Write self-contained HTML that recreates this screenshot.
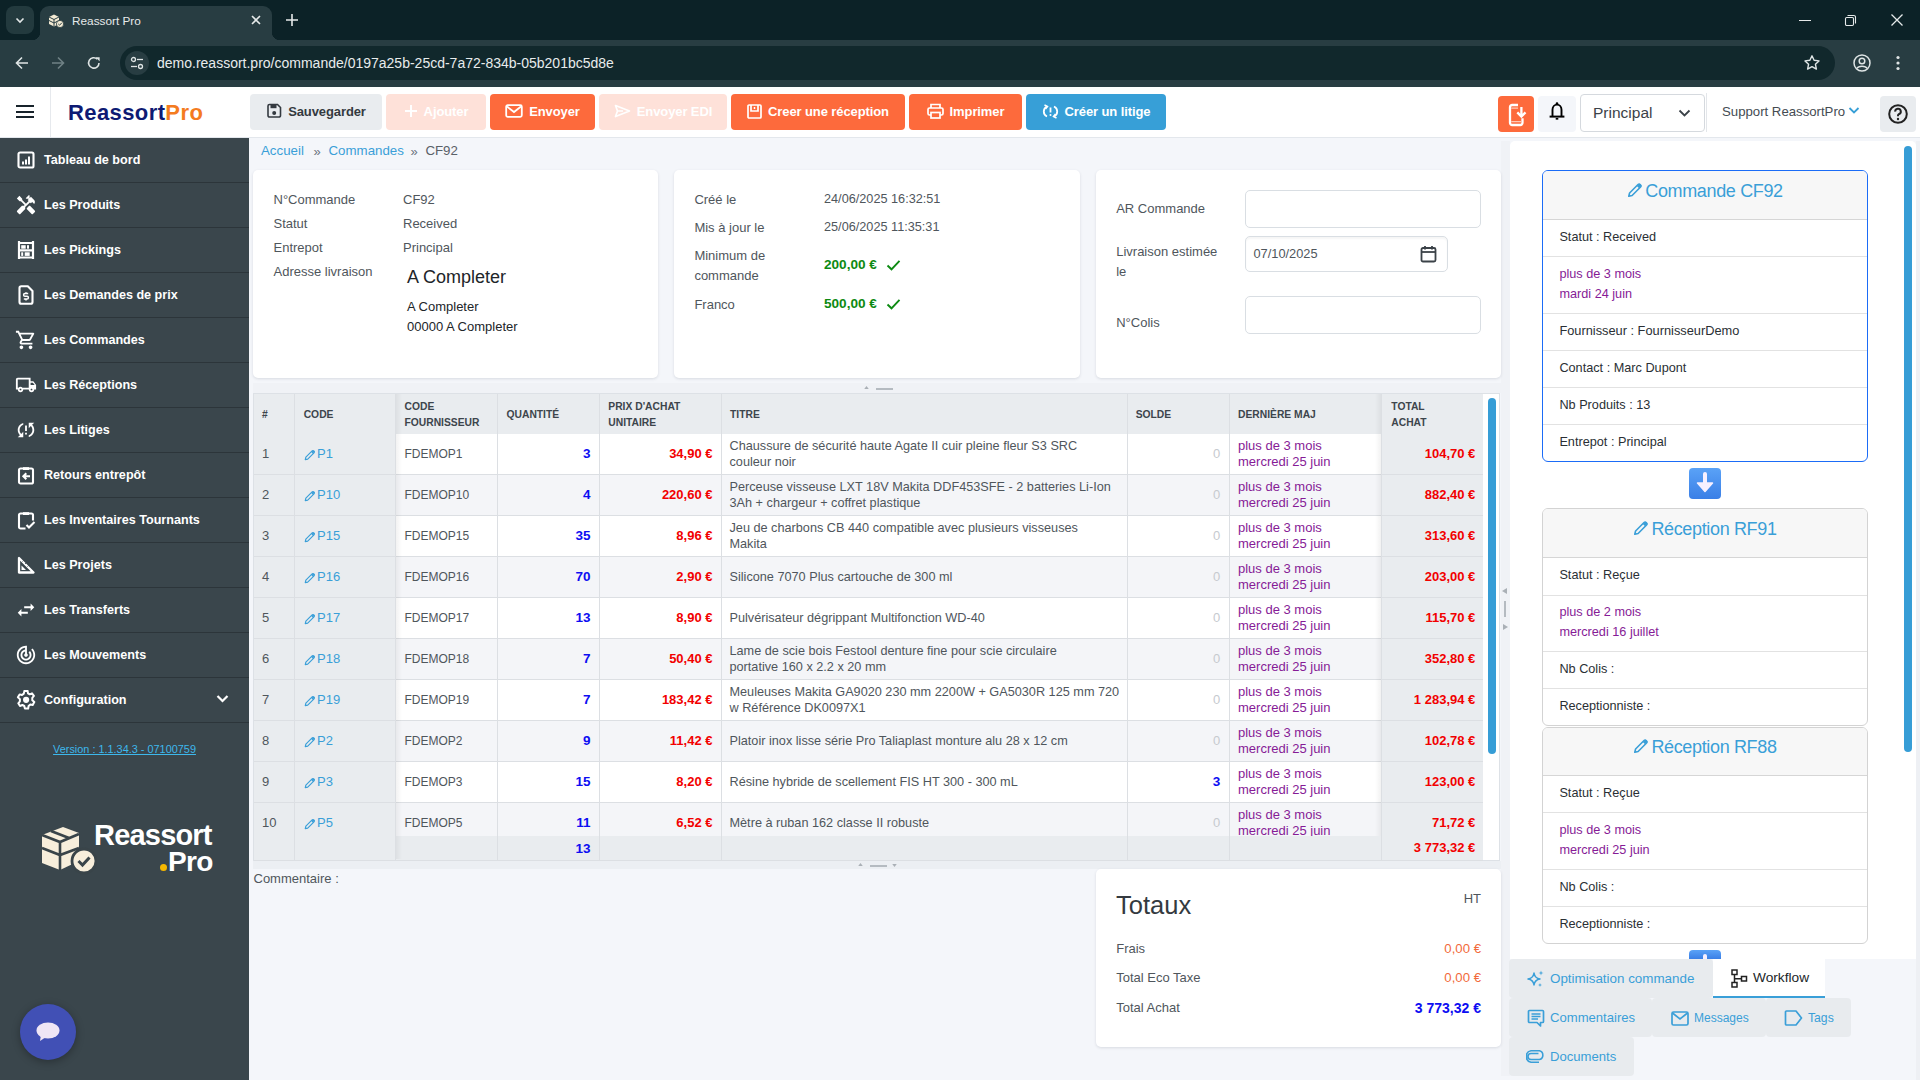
<!DOCTYPE html>
<html><head><meta charset="utf-8">
<style>
*{box-sizing:border-box}
html,body{margin:0;padding:0}
body{width:1920px;height:1080px;overflow:hidden;position:relative;font-family:"Liberation Sans",sans-serif;background:#f4f6fa;color:#495057}
.a{position:absolute}
svg{display:block}
/* chrome */
#tabbar{left:0;top:0;width:1920px;height:40px;background:#0c2227}
#toolbar{left:0;top:40px;width:1920px;height:47px;background:#283d42}
/* header */
#hdr{left:0;top:87px;width:1920px;height:51px;background:#fff;border-bottom:1px solid #e3e7ec}
.btn{position:absolute;top:94px;height:36px;padding-bottom:2px;border-radius:4px;color:#fff;font-weight:700;font-size:13px;display:flex;align-items:center;justify-content:center;gap:6px;letter-spacing:-0.1px}
.or{background:#fd6a3c}
.orl{background:#fee1d9}
/* sidebar */
#side{left:0;top:138px;width:249px;height:942px;background:#3a464c}
.si{position:absolute;left:0;width:249px;height:45px;border-bottom:1px solid #2c353a;color:#fff;font-weight:700;font-size:12.6px}
.si span{position:absolute;left:44px;top:15px}
.si svg{position:absolute;left:16px;top:12px}
/* cards */
.card{position:absolute;background:#fff;border-radius:5px;box-shadow:0 1px 2px rgba(0,0,0,0.08)}
.lbl{position:absolute;font-size:13px;color:#4a5157;white-space:nowrap}
/* table */
.th{position:absolute;font-size:11.5px;font-weight:700;color:#3f474d;letter-spacing:0.1px;line-height:16px}
.td{position:absolute;font-size:13px;white-space:nowrap}
</style></head><body>

<!-- ================= CHROME ================= -->
<div id="tabbar" class="a"></div>
<div id="toolbar" class="a"></div>
<!-- tab dropdown -->
<div class="a" style="left:6px;top:6px;width:28px;height:28px;border-radius:8px;background:#233a3e"></div>
<svg class="a" style="left:14px;top:14px" width="12" height="12" viewBox="0 0 12 12"><path d="M2.5 4.5 L6 8 L9.5 4.5" stroke="#e3e8e8" stroke-width="1.6" fill="none"/></svg>
<!-- active tab -->
<div class="a" style="left:40px;top:6px;width:232px;height:34px;background:#283d42;border-radius:9px 9px 0 0"></div>
<div class="a" style="left:32px;top:32px;width:8px;height:8px;background:radial-gradient(circle at 0 0,#0c2227 8px,#283d42 8.5px)"></div>
<div class="a" style="left:272px;top:32px;width:8px;height:8px;background:radial-gradient(circle at 8px 0,#0c2227 8px,#283d42 8.5px)"></div>
<!-- favicon -->
<svg class="a" style="left:48px;top:13px" width="16" height="15" viewBox="0 0 16 15"><path d="M1 4 L6 1.5 L11 4 L11 11 L6 13.5 L1 11 Z" fill="#f3ead3"/><path d="M1 4 L6 6.5 L11 4 M6 6.5 V13.5 M1 7.5 L6 10 L11 7.5" stroke="#283d42" stroke-width="1" fill="none"/><circle cx="12" cy="11" r="3.6" fill="#f3ead3" stroke="#283d42" stroke-width="0.8"/><path d="M10.3 11 L11.6 12.2 L13.8 9.8" stroke="#283d42" stroke-width="1" fill="none"/></svg>
<div class="a" style="left:72px;top:14px;font-size:11.8px;color:#e6eaea;white-space:nowrap">Reassort Pro</div>
<svg class="a" style="left:250px;top:14px" width="12" height="12" viewBox="0 0 12 12"><path d="M2 2 L10 10 M10 2 L2 10" stroke="#e6eaea" stroke-width="1.6"/></svg>
<svg class="a" style="left:285px;top:13px" width="14" height="14" viewBox="0 0 14 14"><path d="M7 1 V13 M1 7 H13" stroke="#e6eaea" stroke-width="1.6"/></svg>
<!-- window controls -->
<div class="a" style="left:1799px;top:20px;width:12px;height:1px;background:#e6eaea"></div>
<svg class="a" style="left:1844px;top:14px" width="13" height="13" viewBox="0 0 13 13"><rect x="1.5" y="3.5" width="8" height="8" rx="1.2" stroke="#e6eaea" stroke-width="1.1" fill="none"/><path d="M3.5 1.5 H9.8 A1.7 1.7 0 0 1 11.5 3.2 V9.5" stroke="#e6eaea" stroke-width="1.1" fill="none"/></svg>
<svg class="a" style="left:1890px;top:13px" width="14" height="14" viewBox="0 0 14 14"><path d="M1.5 1.5 L12.5 12.5 M12.5 1.5 L1.5 12.5" stroke="#e6eaea" stroke-width="1.3"/></svg>
<!-- nav -->
<svg class="a" style="left:14px;top:55px" width="16" height="16" viewBox="0 0 16 16"><path d="M14 8 H2.5 M8 2.5 L2.5 8 L8 13.5" stroke="#dfe5e5" stroke-width="1.6" fill="none"/></svg>
<svg class="a" style="left:50px;top:55px" width="16" height="16" viewBox="0 0 16 16"><path d="M2 8 H13.5 M8 2.5 L13.5 8 L8 13.5" stroke="#6f8185" stroke-width="1.6" fill="none"/></svg>
<svg class="a" style="left:86px;top:55px" width="16" height="16" viewBox="0 0 16 16"><path d="M13 8 A5.2 5.2 0 1 1 11.3 4.1" stroke="#dfe5e5" stroke-width="1.6" fill="none"/><path d="M9.5 2.2 L13.6 2.2 L13.6 6.3 Z" fill="#dfe5e5"/></svg>
<!-- url field -->
<div class="a" style="left:120px;top:46px;width:1715px;height:34px;border-radius:17px;background:#11282c"></div>
<div class="a" style="left:125px;top:51px;width:24px;height:24px;border-radius:12px;background:#283d42"></div>
<svg class="a" style="left:129px;top:55px" width="16" height="16" viewBox="0 0 16 16"><circle cx="4.5" cy="4.5" r="2" stroke="#dfe5e5" stroke-width="1.3" fill="none"/><path d="M8 4.5 H14" stroke="#dfe5e5" stroke-width="1.3"/><circle cx="11.5" cy="11.5" r="2" stroke="#dfe5e5" stroke-width="1.3" fill="none"/><path d="M2 11.5 H8" stroke="#dfe5e5" stroke-width="1.3"/></svg>
<div class="a" style="left:157px;top:55px;font-size:14px;color:#e8ecec;white-space:nowrap">demo.reassort.pro/commande/0197a25b-25cd-7a72-834b-05b201bc5d8e</div>
<svg class="a" style="left:1803px;top:54px" width="18" height="18" viewBox="0 0 18 18"><path d="M9 1.8 L11.1 6.3 L16 6.9 L12.4 10.2 L13.4 15.1 L9 12.6 L4.6 15.1 L5.6 10.2 L2 6.9 L6.9 6.3 Z" stroke="#dfe5e5" stroke-width="1.4" fill="none" stroke-linejoin="round"/></svg>
<svg class="a" style="left:1852px;top:53px" width="20" height="20" viewBox="0 0 20 20"><circle cx="10" cy="10" r="8" stroke="#dfe5e5" stroke-width="1.5" fill="none"/><circle cx="10" cy="8" r="2.8" stroke="#dfe5e5" stroke-width="1.5" fill="none"/><path d="M4.8 15.5 C6.5 12.5 13.5 12.5 15.2 15.5" stroke="#dfe5e5" stroke-width="1.5" fill="none"/></svg>
<svg class="a" style="left:1895px;top:55px" width="6" height="16" viewBox="0 0 6 16"><circle cx="3" cy="2.5" r="1.6" fill="#dfe5e5"/><circle cx="3" cy="8" r="1.6" fill="#dfe5e5"/><circle cx="3" cy="13.5" r="1.6" fill="#dfe5e5"/></svg>

<!-- ================= HEADER ================= -->
<div id="hdr" class="a"></div>
<div class="a" style="left:16px;top:105px;width:18px;height:2px;background:#18232b"></div>
<div class="a" style="left:16px;top:111px;width:18px;height:2px;background:#18232b"></div>
<div class="a" style="left:16px;top:116px;width:18px;height:2px;background:#18232b"></div>
<div class="a" style="left:50px;top:87px;width:1px;height:50px;background:#e6e9ed"></div>
<div class="a" style="left:68px;top:100px;font-size:22px;font-weight:700;white-space:nowrap;letter-spacing:0.4px"><span style="color:#0e1a73">Reassort</span><span style="color:#f47b20">Pro</span></div>

<div class="btn" style="left:250px;width:132px;background:#e9ecef;color:#343a40">
 <svg width="16" height="16" viewBox="0 0 16 16"><path d="M2 3 A1.5 1.5 0 0 1 3.5 1.5 H11.5 L14.5 4.5 V12.5 A1.5 1.5 0 0 1 13 14 H3.5 A1.5 1.5 0 0 1 2 12.5 Z" stroke="#343a40" stroke-width="1.6" fill="none"/><rect x="4.5" y="2" width="6" height="3.2" fill="#343a40"/><circle cx="8.2" cy="10" r="2" fill="#343a40"/></svg>
 <span>Sauvegarder</span></div>
<div class="btn orl" style="left:386px;width:100px">
 <svg width="14" height="14" viewBox="0 0 14 14"><path d="M7 1 V13 M1 7 H13" stroke="#fff" stroke-width="2"/></svg><span>Ajouter</span></div>
<div class="btn or" style="left:490px;width:105px">
 <svg width="18" height="14" viewBox="0 0 18 14"><rect x="1.2" y="1.2" width="15.6" height="11.6" rx="1.5" stroke="#fff" stroke-width="1.8" fill="none"/><path d="M2 2.5 L9 8 L16 2.5" stroke="#fff" stroke-width="1.8" fill="none"/></svg><span>Envoyer</span></div>
<div class="btn orl" style="left:599px;width:128px">
 <svg width="17" height="14" viewBox="0 0 17 14"><path d="M1.5 1.5 L15.5 7 L1.5 12.5 L3.5 7 Z M3.5 7 H9" stroke="#fff" stroke-width="1.7" fill="none" stroke-linejoin="round"/></svg><span>Envoyer EDI</span></div>
<div class="btn or" style="left:731px;width:174px">
 <svg width="15" height="15" viewBox="0 0 15 15"><rect x="1" y="1" width="13" height="13" rx="1" stroke="#fff" stroke-width="1.7" fill="none"/><path d="M4 1 V7 H11 V1" stroke="#fff" stroke-width="1.7" fill="none"/><path d="M7.5 3 V5" stroke="#fff" stroke-width="1.5"/></svg><span>Creer une réception</span></div>
<div class="btn or" style="left:909px;width:113px">
 <svg width="17" height="16" viewBox="0 0 17 16"><path d="M4 5 V1.5 H13 V5" stroke="#fff" stroke-width="1.7" fill="none"/><rect x="1" y="5" width="15" height="7" rx="1.5" stroke="#fff" stroke-width="1.7" fill="none"/><rect x="4" y="9.5" width="9" height="5.5" stroke="#fff" stroke-width="1.7" fill="#fd6a3c"/></svg><span>Imprimer</span></div>
<div class="btn" style="left:1026px;width:140px;background:#379fd7">
 <svg width="17" height="15" viewBox="0 0 17 15"><path d="M5 2.5 A5.5 5.5 0 0 0 5 12.5" stroke="#fff" stroke-width="1.8" fill="none"/><path d="M12 2.5 A5.5 5.5 0 0 1 12 12.5" stroke="#fff" stroke-width="1.8" fill="none"/><path d="M2.5 1 L5.5 2.5 L3.5 5" stroke="#fff" stroke-width="1.5" fill="none"/><path d="M14.5 14 L11.5 12.5 L13.5 10" stroke="#fff" stroke-width="1.5" fill="none"/><path d="M8.5 3.5 V8.5" stroke="#fff" stroke-width="1.8"/><circle cx="8.5" cy="11" r="1" fill="#fff"/></svg><span>Créer un litige</span></div>

<!-- right header -->
<div class="a" style="left:1498px;top:96px;width:36px;height:36px;border-radius:4px;background:#fd6a3c"></div>
<svg class="a" style="left:1508px;top:103px" width="22" height="24" viewBox="0 0 22 24"><path d="M10 2 H4.2 A2.2 2.2 0 0 0 2 4.2 V19.8 A2.2 2.2 0 0 0 4.2 22 H12.3 A2.2 2.2 0 0 0 14.5 19.8 V15.2" stroke="#fff" stroke-width="2.3" fill="none"/><path d="M3.2 5.2 H10 M3.2 18.6 H13.4" stroke="#ffc9b6" stroke-width="1.3"/><path d="M13.4 4 V13.2 M9.3 9.4 L13.4 13.6 L17.5 9.4" stroke="#fff" stroke-width="2.3" fill="none"/></svg>
<div class="a" style="left:1538px;top:96px;width:38px;height:36px;border-radius:4px;background:#f4f6fa"></div>
<svg class="a" style="left:1547px;top:100px" width="20" height="22" viewBox="0 0 20 22"><path d="M5.5 16.5 V9.8 A4.5 5.2 0 0 1 14.5 9.8 V16.5" stroke="#000" stroke-width="1.9" fill="none"/><path d="M2.6 16.6 H17.4" stroke="#000" stroke-width="2"/><circle cx="10" cy="3.6" r="1.3" fill="#000"/><path d="M8.7 18.8 H11.3" stroke="#000" stroke-width="1.7"/></svg>
<div class="a" style="left:1580px;top:94px;width:125px;height:38px;border-radius:4px;border:1px solid #d5d9de;background:#fff"></div>
<div class="a" style="left:1593px;top:104px;font-size:15.5px;color:#3b4248;white-space:nowrap">Principal</div>
<svg class="a" style="left:1678px;top:108px" width="13" height="10" viewBox="0 0 13 10"><path d="M1.5 2.5 L6.5 7.5 L11.5 2.5" stroke="#3b4248" stroke-width="1.8" fill="none"/></svg>
<div class="a" style="left:1706px;top:93px;width:1px;height:39px;background:#e3e6ea"></div>
<div class="a" style="left:1722px;top:104px;font-size:13.2px;color:#444b52;white-space:nowrap">Support ReassortPro</div>
<svg class="a" style="left:1848px;top:106px" width="12" height="9" viewBox="0 0 12 9"><path d="M1.5 2 L6 6.5 L10.5 2" stroke="#379fd7" stroke-width="1.8" fill="none"/></svg>
<div class="a" style="left:1880px;top:96px;width:36px;height:36px;border-radius:4px;background:#e9ecef"></div>
<svg class="a" style="left:1887px;top:103px" width="22" height="22" viewBox="0 0 22 22"><circle cx="11" cy="11" r="8.8" stroke="#222" stroke-width="2" fill="none"/><path d="M8.2 8.6 A2.8 2.8 0 1 1 11.8 11.2 C11.2 11.5 11 12 11 12.8 V13.3" stroke="#222" stroke-width="2" fill="none"/><circle cx="11" cy="16" r="1.2" fill="#222"/></svg>

<!-- ================= SIDEBAR ================= -->
<div id="side" class="a">
<div class="si" style="top:0px"><svg width="20" height="20" viewBox="0 0 20 20"><rect x="2.5" y="2.5" width="15" height="15" rx="1.6" stroke="#fff" stroke-width="2.1" fill="none"/><rect x="6" y="11.5" width="2" height="3" fill="#fff"/><rect x="9" y="9.5" width="2" height="5" fill="#fff"/><rect x="12" y="6.5" width="2" height="8" fill="#fff"/></svg><span>Tableau de bord</span></div>
<div class="si" style="top:45px"><svg width="22" height="22" viewBox="0 0 24 24" style="left:15px;top:11px"><path d="M21.67 18.17l-5.3-5.3h-.99l-2.54 2.54v.99l5.3 5.3c.39.39 1.02.39 1.41 0l2.12-2.12c.39-.38.39-1.02 0-1.41zM17.34 10.19l1.41-1.41 2.12 2.12c1.17-1.17 1.17-3.07 0-4.24l-3.54-3.54-1.41 1.41V1.71l-.7-.71-3.54 3.54.71.71h2.83l-1.41 1.41 1.06 1.06-2.89 2.89-4.13-4.13V5.06L4.83 2.04 2 4.87 5.03 7.9h1.41l4.13 4.13-.85.85H7.6l-5.3 5.3c-.39.39-.39 1.02 0 1.41l2.12 2.12c.39.39 1.02.39 1.41 0l5.3-5.3v-2.12l5.15-5.15 1.06 1.05z" fill="#fff"/></svg><span>Les Produits</span></div>
<div class="si" style="top:90px"><svg width="20" height="20" viewBox="0 0 20 20"><path d="M3 1 V19 M17 1 V19" stroke="#fff" stroke-width="2.2"/><path d="M3 3 H17 M3 10.3 H17 M3 17.5 H17" stroke="#fff" stroke-width="2.2"/><rect x="5.2" y="5.2" width="4.5" height="3.5" fill="#fff"/><rect x="11" y="5.2" width="2" height="3.5" fill="#fff"/><rect x="5.2" y="12.3" width="2" height="3.6" fill="#fff"/><rect x="8.7" y="12.3" width="5" height="3.6" fill="#fff"/></svg><span>Les Pickings</span></div>
<div class="si" style="top:135px"><svg width="20" height="20" viewBox="0 0 20 20"><path d="M3.5 3 A1.8 1.8 0 0 1 5.3 1.2 H11.8 L16.5 5.9 V17 A1.8 1.8 0 0 1 14.7 18.8 H5.3 A1.8 1.8 0 0 1 3.5 17 Z" stroke="#fff" stroke-width="2.1" fill="none" stroke-linejoin="round"/><path d="M12.2 8.5 H9 A1.4 1.4 0 0 0 9 11.3 H11 A1.4 1.4 0 0 1 11 14.1 H7.8 M10 7.3 V8.5 M10 14.1 V15.5" stroke="#fff" stroke-width="1.5" fill="none"/></svg><span>Les Demandes de prix</span></div>
<div class="si" style="top:180px"><svg width="22" height="22" viewBox="0 0 24 24" style="left:15px;top:11px"><path d="M15.55 13c.75 0 1.41-.41 1.75-1.03l3.58-6.49c.37-.66-.11-1.48-.87-1.48H5.21l-.94-2H1v2h2l3.6 7.59-1.35 2.44C4.52 15.37 5.48 17 7 17h12v-2H7l1.1-2h7.45zM6.16 6h12.15l-2.76 5H8.53L6.16 6zM7 18c-1.1 0-1.99.9-1.99 2S5.9 22 7 22s2-.9 2-2-.9-2-2-2zm10 0c-1.1 0-1.99.9-1.99 2s.89 2 1.99 2 2-.9 2-2-.9-2-2-2z" fill="#fff"/></svg><span>Les Commandes</span></div>
<div class="si" style="top:225px"><svg width="22" height="22" viewBox="0 0 24 24" style="left:15px;top:11px"><path d="M20 8h-3V4H3c-1.1 0-2 .9-2 2v11h2c0 1.66 1.34 3 3 3s3-1.34 3-3h6c0 1.66 1.34 3 3 3s3-1.34 3-3h2v-5l-3-4zm-.5 1.5l1.96 2.5H17V9.5h2.5zM6 18c-.55 0-1-.45-1-1s.45-1 1-1 1 .45 1 1-.45 1-1 1zm2.22-3c-.55-.61-1.33-1-2.22-1s-1.67.39-2.22 1H3V6h12v9H8.22zM18 18c-.55 0-1-.45-1-1s.45-1 1-1 1 .45 1 1-.45 1-1 1z" fill="#fff"/></svg><span>Les Réceptions</span></div>
<div class="si" style="top:270px"><svg width="22" height="22" viewBox="0 0 24 24" style="left:15px;top:11px"><path d="M3 12c0 2.21.91 4.2 2.36 5.64L3 20h6v-6l-2.24 2.24C5.68 15.15 5 13.66 5 12c0-2.61 1.67-4.83 4-5.65V4.26C5.55 5.15 3 8.27 3 12zm8 5h2v-2h-2v2zM21 4h-6v6l2.24-2.24C18.32 8.85 19 10.34 19 12c0 2.61-1.67 4.83-4 5.65v2.09c3.45-.89 6-4.01 6-7.74 0-2.21-.91-4.2-2.36-5.64L21 4zm-10 9h2V7h-2v6z" fill="#fff"/></svg><span>Les Litiges</span></div>
<div class="si" style="top:315px"><svg width="20" height="20" viewBox="0 0 20 20"><rect x="3" y="3.5" width="14" height="15" rx="1.6" stroke="#fff" stroke-width="2.1" fill="none"/><path d="M7 2.2 H13 V5 H7 Z" fill="#fff"/><path d="M14 11.3 H7.3 M10.3 8.3 L7.3 11.3 L10.3 14.3" stroke="#fff" stroke-width="2" fill="none"/></svg><span>Retours entrepôt</span></div>
<div class="si" style="top:360px"><svg width="20" height="20" viewBox="0 0 20 20"><path d="M9.5 18.5 H4.6 A1.6 1.6 0 0 1 3 16.9 V5.1 A1.6 1.6 0 0 1 4.6 3.5 H15.4 A1.6 1.6 0 0 1 17 5.1 V10.5" stroke="#fff" stroke-width="2.1" fill="none"/><path d="M7 2.2 H13 V5 H7 Z" fill="#fff"/><path d="M10.5 15 L13 17.5 L18.5 12" stroke="#fff" stroke-width="2.1" fill="none"/></svg><span>Les Inventaires Tournants</span></div>
<div class="si" style="top:405px"><svg width="20" height="20" viewBox="0 0 20 20"><path d="M3 3 V17.5 H17.5 Z" stroke="#fff" stroke-width="2.3" fill="none" stroke-linejoin="round"/><path d="M5.5 10.5 V15 H10 Z" fill="#fff"/><path d="M6.5 6.5 L7.5 5.5 M9 9 L10 8 M11.5 11.5 L12.5 10.5" stroke="#394449" stroke-width="0.8"/></svg><span>Les Projets</span></div>
<div class="si" style="top:450px"><svg width="22" height="22" viewBox="0 0 24 24" style="left:15px;top:11px"><path d="M6.99 11L3 15l3.99 4v-3H14v-2H6.99v-3zM21 9l-3.99-4v3H10v2h7.01v3L21 9z" fill="#fff"/></svg><span>Les Transferts</span></div>
<div class="si" style="top:495px"><svg width="22" height="22" viewBox="0 0 24 24" style="left:15px;top:11px"><path d="M19.07 4.93l-1.41 1.41C19.1 7.79 20 9.79 20 12c0 4.42-3.58 8-8 8s-8-3.58-8-8c0-4.08 3.05-7.44 7-7.93v2.02C8.16 6.57 6 9.03 6 12c0 3.31 2.69 6 6 6s6-2.69 6-6c0-1.66-.67-3.16-1.76-4.24l-1.41 1.41C15.55 9.9 16 10.9 16 12c0 2.21-1.79 4-4 4s-4-1.79-4-4c0-1.86 1.28-3.41 3-3.86v2.14c-.6.35-1 .98-1 1.72 0 1.1.9 2 2 2s2-.9 2-2c0-.74-.4-1.38-1-1.72V2h-1C6.48 2 2 6.48 2 12s4.48 10 10 10 10-4.48 10-10c0-2.76-1.12-5.26-2.93-7.07z" fill="#fff"/></svg><span>Les Mouvements</span></div>
<div class="si" style="top:540px"><svg width="20" height="20" viewBox="0 0 20 20"><path d="M8.4 0.9 H11.6 L12 3.3 L13.8 4.3 L16 3.3 L17.9 5.9 L16.3 7.8 V10.2 L18.3 12 L16.7 14.9 L14.3 14.4 L12.6 15.9 L12.2 18.6 H8.9 L8.3 16 L6.4 15 L4 16 L2.3 13.3 L3.9 11.3 V9.1 L1.9 7.2 L3.6 4.4 L6 5 L7.8 3.6 Z" stroke="#fff" stroke-width="2" fill="none" stroke-linejoin="round"/><circle cx="10.1" cy="9.8" r="3.1" fill="#fff"/></svg><span>Configuration</span></div>
<svg class="a" style="left:216px;top:556px" width="13" height="10" viewBox="0 0 13 10"><path d="M1.5 2 L6.5 7 L11.5 2" stroke="#fff" stroke-width="2.2" fill="none"/></svg>
<div class="a" style="left:0;top:605px;width:249px;text-align:center;font-size:10.9px;color:#3db8ec;text-decoration:underline;white-space:nowrap">Version : 1.1.34.3 - 07100759</div>
</div>
<!-- sidebar logo -->
<svg class="a" style="left:39px;top:823px" width="58" height="52" viewBox="0 0 58 52">
 <path d="M3 12 L24 4 L40 10 L40 38 L21 47 L3 40 Z" fill="#f7eedb"/>
 <path d="M3 12 L21 19 L40 11 M21 19 V47" stroke="#394449" stroke-width="2.6" fill="none"/>
 <path d="M3 25 L21 32 L40 25" stroke="#394449" stroke-width="2.6" fill="none"/>
 <path d="M12 8 L30 15" stroke="#394449" stroke-width="2.6" fill="none"/>
 <circle cx="45" cy="38" r="12" fill="#f7eedb" stroke="#394449" stroke-width="2.8"/>
 <path d="M39.5 38 L43.5 42 L50.5 34.5" stroke="#394449" stroke-width="3" fill="none"/>
</svg>
<div class="a" style="left:94px;top:819px;font-size:29px;font-weight:700;color:#fff;white-space:nowrap;letter-spacing:-0.8px">Reassort</div>
<div class="a" style="left:168px;top:846px;font-size:28px;font-weight:700;color:#fff;white-space:nowrap;letter-spacing:-0.6px">Pro</div>
<div class="a" style="left:160px;top:864px;width:7px;height:7px;border-radius:50%;background:#f5b700"></div>
<div class="a" style="left:20px;top:1004px;width:56px;height:56px;border-radius:28px;background:#4150b5;box-shadow:0 2px 8px rgba(0,0,0,0.3)"></div>
<svg class="a" style="left:35px;top:1020px" width="26" height="24" viewBox="0 0 26 24"><ellipse cx="13" cy="10.5" rx="11.5" ry="8" fill="#efe6f5"/><path d="M6 15 L5 21 L11 17 Z" fill="#efe6f5"/></svg>

<!-- ================= MAIN ================= -->
<div class="a" style="left:249px;top:378px;width:1260px;height:15px;background:#f4f6fa"></div>
<div class="a" style="left:253px;top:383px;width:1248px;height:10px;background:#f0f2f6"></div>
<div class="a" style="left:253px;top:861px;width:1248px;height:8px;background:#eceff3"></div>
<div class="a" style="left:1501px;top:141px;width:9px;height:935px;background:#f0f2f6"></div>
<div class="a" style="left:261.0px;top:144.34px;font-size:13.3px;line-height:13.3px;color:#3a9fd8;font-weight:400;white-space:nowrap;">Accueil</div>
<div class="a" style="left:313.5px;top:145.00px;font-size:13px;line-height:13px;color:#6c757d;font-weight:400;white-space:nowrap;">&raquo;</div>
<div class="a" style="left:328.5px;top:144.34px;font-size:13.3px;line-height:13.3px;color:#3a9fd8;font-weight:400;white-space:nowrap;">Commandes</div>
<div class="a" style="left:410.5px;top:145.00px;font-size:13px;line-height:13px;color:#6c757d;font-weight:400;white-space:nowrap;">&raquo;</div>
<div class="a" style="left:425.4px;top:144.34px;font-size:13.3px;line-height:13.3px;color:#5a6168;font-weight:400;white-space:nowrap;">CF92</div>
<div class="a" style="left:253px;top:170px;width:405px;height:208px;background:#fff;border-radius:5px;box-shadow:0 1px 3px rgba(30,40,60,0.13)"></div>
<div class="a" style="left:674px;top:170px;width:406px;height:208px;background:#fff;border-radius:5px;box-shadow:0 1px 3px rgba(30,40,60,0.13)"></div>
<div class="a" style="left:1096px;top:170px;width:405px;height:208px;background:#fff;border-radius:5px;box-shadow:0 1px 3px rgba(30,40,60,0.13)"></div>
<div class="a" style="left:273.5px;top:192.60px;font-size:13px;line-height:13px;color:#4f565c;font-weight:400;white-space:nowrap;">N°Commande</div>
<div class="a" style="left:403.0px;top:192.60px;font-size:13px;line-height:13px;color:#4f565c;font-weight:400;white-space:nowrap;">CF92</div>
<div class="a" style="left:273.5px;top:216.60px;font-size:13px;line-height:13px;color:#4f565c;font-weight:400;white-space:nowrap;">Statut</div>
<div class="a" style="left:403.0px;top:216.60px;font-size:13px;line-height:13px;color:#4f565c;font-weight:400;white-space:nowrap;">Received</div>
<div class="a" style="left:273.5px;top:240.60px;font-size:13px;line-height:13px;color:#4f565c;font-weight:400;white-space:nowrap;">Entrepot</div>
<div class="a" style="left:403.0px;top:240.60px;font-size:13px;line-height:13px;color:#4f565c;font-weight:400;white-space:nowrap;">Principal</div>
<div class="a" style="left:273.5px;top:264.60px;font-size:13px;line-height:13px;color:#4f565c;font-weight:400;white-space:nowrap;">Adresse livraison</div>
<div class="a" style="left:407.0px;top:268.36px;font-size:18px;line-height:18px;color:#212529;font-weight:400;white-space:nowrap;">A Completer</div>
<div class="a" style="left:407.0px;top:300.30px;font-size:13px;line-height:13px;color:#212529;font-weight:400;white-space:nowrap;">A Completer</div>
<div class="a" style="left:407.0px;top:320.30px;font-size:13px;line-height:13px;color:#212529;font-weight:400;white-space:nowrap;">00000 A Completer</div>
<div class="a" style="left:694.4px;top:193.00px;font-size:13px;line-height:13px;color:#4f565c;font-weight:400;white-space:nowrap;">Créé le</div>
<div class="a" style="left:824.0px;top:193.25px;font-size:12.7px;line-height:12.7px;color:#4f565c;font-weight:400;white-space:nowrap;">24/06/2025 16:32:51</div>
<div class="a" style="left:694.4px;top:221.20px;font-size:13px;line-height:13px;color:#4f565c;font-weight:400;white-space:nowrap;">Mis à jour le</div>
<div class="a" style="left:824.0px;top:221.45px;font-size:12.7px;line-height:12.7px;color:#4f565c;font-weight:400;white-space:nowrap;">25/06/2025 11:35:31</div>
<div class="a" style="left:694.4px;top:249.20px;font-size:13px;line-height:13px;color:#4f565c;font-weight:400;white-space:nowrap;">Minimum de</div>
<div class="a" style="left:694.4px;top:268.60px;font-size:13px;line-height:13px;color:#4f565c;font-weight:400;white-space:nowrap;">commande</div>
<div class="a" style="left:694.4px;top:298.00px;font-size:13px;line-height:13px;color:#4f565c;font-weight:400;white-space:nowrap;">Franco</div>
<div class="a" style="left:824.0px;top:258.49px;font-size:13.6px;line-height:13.6px;color:#0d8a12;font-weight:700;white-space:nowrap;">200,00 €</div>
<div class="a" style="left:824.0px;top:297.49px;font-size:13.6px;line-height:13.6px;color:#0d8a12;font-weight:700;white-space:nowrap;">500,00 €</div>
<svg class="a" style="left:886px;top:259px" width="15" height="12" viewBox="0 0 15 12"><path d="M1.5 6.5 L5.5 10.3 L13.5 1.8" stroke="#0d8a12" stroke-width="1.9" fill="none"/></svg>
<svg class="a" style="left:886px;top:298px" width="15" height="12" viewBox="0 0 15 12"><path d="M1.5 6.5 L5.5 10.3 L13.5 1.8" stroke="#0d8a12" stroke-width="1.9" fill="none"/></svg>
<div class="a" style="left:1116.2px;top:202.30px;font-size:13px;line-height:13px;color:#4f565c;font-weight:400;white-space:nowrap;">AR Commande</div>
<div class="a" style="left:1116.2px;top:245.30px;font-size:13px;line-height:13px;color:#4f565c;font-weight:400;white-space:nowrap;">Livraison estimée</div>
<div class="a" style="left:1116.2px;top:265.00px;font-size:13px;line-height:13px;color:#4f565c;font-weight:400;white-space:nowrap;">le</div>
<div class="a" style="left:1116.2px;top:315.90px;font-size:13px;line-height:13px;color:#4f565c;font-weight:400;white-space:nowrap;">N°Colis</div>
<div class="a" style="left:1245px;top:190px;width:236px;height:38px;background:#fff;border:1px solid #d9dee3;border-radius:5px"></div>
<div class="a" style="left:1245px;top:236px;width:203px;height:36px;background:#fff;border:1px solid #d9dee3;border-radius:5px;box-shadow:inset 0 2px 2px rgba(0,0,0,0.04)"></div>
<div class="a" style="left:1245px;top:296px;width:236px;height:38px;background:#fff;border:1px solid #d9dee3;border-radius:5px"></div>
<div class="a" style="left:1253.5px;top:248.36px;font-size:12.8px;line-height:12.8px;color:#4f565c;font-weight:400;white-space:nowrap;">07/10/2025</div>
<svg class="a" style="left:1420px;top:245px" width="17" height="18" viewBox="0 0 17 18"><rect x="1.5" y="3" width="14" height="13.5" rx="1.5" stroke="#3b4248" stroke-width="1.8" fill="none"/><path d="M1.5 7 H15.5" stroke="#3b4248" stroke-width="1.8"/><path d="M5 1 V4.5 M12 1 V4.5" stroke="#3b4248" stroke-width="1.8"/></svg>
<svg class="a" style="left:864px;top:386px" width="5" height="3" viewBox="0 0 6 4"><path d="M0 4 L3 0 L6 4 Z" fill="#aab0b6"/></svg>
<div class="a" style="left:876px;top:388px;width:17px;height:2px;background:#b5bbc1"></div>
<svg class="a" style="left:858px;top:863px" width="5" height="3" viewBox="0 0 6 4"><path d="M0 4 L3 0 L6 4 Z" fill="#aab0b6"/></svg>
<div class="a" style="left:870px;top:865px;width:17px;height:2px;background:#b5bbc1"></div>
<svg class="a" style="left:892px;top:864px" width="5" height="3" viewBox="0 0 6 4"><path d="M0 0 L3 4 L6 0 Z" fill="#aab0b6"/></svg>
<svg class="a" style="left:1502px;top:588px" width="5" height="6" viewBox="0 0 5 6"><path d="M5 0 L0 3 L5 6 Z" fill="#aab0b6"/></svg>
<div class="a" style="left:1504px;top:601px;width:2px;height:16px;background:#b5bbc1"></div>
<svg class="a" style="left:1503px;top:624px" width="5" height="6" viewBox="0 0 5 6"><path d="M0 0 L5 3 L0 6 Z" fill="#aab0b6"/></svg>
<div class="a" style="left:253px;top:393px;width:1247px;height:468px;background:#fff;border:1px solid #dde1e6"></div>
<div class="a" style="left:254px;top:394px;width:1229px;height:40px;background:#e9ecef"></div>
<div class="a" style="left:395px;top:434px;width:986px;height:41px;background:#fff"></div>
<div class="a" style="left:395px;top:475px;width:986px;height:41px;background:#f4f5f8"></div>
<div class="a" style="left:395px;top:516px;width:986px;height:41px;background:#fff"></div>
<div class="a" style="left:395px;top:557px;width:986px;height:41px;background:#f4f5f8"></div>
<div class="a" style="left:395px;top:598px;width:986px;height:41px;background:#fff"></div>
<div class="a" style="left:395px;top:639px;width:986px;height:41px;background:#f4f5f8"></div>
<div class="a" style="left:395px;top:680px;width:986px;height:41px;background:#fff"></div>
<div class="a" style="left:395px;top:721px;width:986px;height:41px;background:#f4f5f8"></div>
<div class="a" style="left:395px;top:762px;width:986px;height:41px;background:#fff"></div>
<div class="a" style="left:395px;top:803px;width:986px;height:41px;background:#f4f5f8"></div>
<div class="a" style="left:254px;top:434px;width:141px;height:402px;background:#e9ecef"></div>
<div class="a" style="left:1381px;top:434px;width:102px;height:402px;background:#e9ecef"></div>
<div class="a" style="left:254px;top:836px;width:1229px;height:23px;background:#e9ecef"></div>
<div class="a" style="left:254px;top:474px;width:1229px;height:1px;background:#dcdfe3"></div>
<div class="a" style="left:254px;top:515px;width:1229px;height:1px;background:#dcdfe3"></div>
<div class="a" style="left:254px;top:556px;width:1229px;height:1px;background:#dcdfe3"></div>
<div class="a" style="left:254px;top:597px;width:1229px;height:1px;background:#dcdfe3"></div>
<div class="a" style="left:254px;top:638px;width:1229px;height:1px;background:#dcdfe3"></div>
<div class="a" style="left:254px;top:679px;width:1229px;height:1px;background:#dcdfe3"></div>
<div class="a" style="left:254px;top:720px;width:1229px;height:1px;background:#dcdfe3"></div>
<div class="a" style="left:254px;top:761px;width:1229px;height:1px;background:#dcdfe3"></div>
<div class="a" style="left:254px;top:802px;width:1229px;height:1px;background:#dcdfe3"></div>
<div class="a" style="left:254px;top:859px;width:1229px;height:1px;background:#dcdfe3"></div>
<div class="a" style="left:294px;top:394px;width:1px;height:465px;background:#dcdfe3"></div>
<div class="a" style="left:395px;top:394px;width:1px;height:465px;background:#dcdfe3"></div>
<div class="a" style="left:497px;top:394px;width:1px;height:465px;background:#dcdfe3"></div>
<div class="a" style="left:599px;top:394px;width:1px;height:465px;background:#dcdfe3"></div>
<div class="a" style="left:721px;top:394px;width:1px;height:465px;background:#dcdfe3"></div>
<div class="a" style="left:1127px;top:394px;width:1px;height:465px;background:#dcdfe3"></div>
<div class="a" style="left:1229px;top:394px;width:1px;height:465px;background:#dcdfe3"></div>
<div class="a" style="left:1381px;top:394px;width:1px;height:465px;background:#dcdfe3"></div>
<div class="a" style="left:396px;top:394px;width:6px;height:465px;background:linear-gradient(90deg,rgba(0,0,0,0.05),rgba(0,0,0,0))"></div>
<div class="a" style="left:1375px;top:394px;width:6px;height:465px;background:linear-gradient(270deg,rgba(0,0,0,0.05),rgba(0,0,0,0))"></div>
<div class="a" style="left:1483px;top:394px;width:16px;height:465px;background:#fff"></div>
<div class="a" style="left:1488px;top:398px;width:8px;height:356px;background:#369dd6;border-radius:4px"></div>
<div class="a" style="left:262.0px;top:410.28px;font-size:10.3px;line-height:10.3px;color:#3d454c;font-weight:700;white-space:nowrap;">#</div>
<div class="a" style="left:303.7px;top:410.28px;font-size:10.3px;line-height:10.3px;color:#3d454c;font-weight:700;white-space:nowrap;">CODE</div>
<div class="a" style="left:404.5px;top:402.28px;font-size:10.3px;line-height:10.3px;color:#3d454c;font-weight:700;white-space:nowrap;">CODE</div>
<div class="a" style="left:404.5px;top:418.08px;font-size:10.3px;line-height:10.3px;color:#3d454c;font-weight:700;white-space:nowrap;">FOURNISSEUR</div>
<div class="a" style="left:506.5px;top:410.28px;font-size:10.3px;line-height:10.3px;color:#3d454c;font-weight:700;white-space:nowrap;">QUANTITÉ</div>
<div class="a" style="left:608.3px;top:402.28px;font-size:10.3px;line-height:10.3px;color:#3d454c;font-weight:700;white-space:nowrap;">PRIX D'ACHAT</div>
<div class="a" style="left:608.3px;top:418.08px;font-size:10.3px;line-height:10.3px;color:#3d454c;font-weight:700;white-space:nowrap;">UNITAIRE</div>
<div class="a" style="left:730.0px;top:410.28px;font-size:10.3px;line-height:10.3px;color:#3d454c;font-weight:700;white-space:nowrap;">TITRE</div>
<div class="a" style="left:1135.7px;top:410.28px;font-size:10.3px;line-height:10.3px;color:#3d454c;font-weight:700;white-space:nowrap;">SOLDE</div>
<div class="a" style="left:1238.0px;top:410.28px;font-size:10.3px;line-height:10.3px;color:#3d454c;font-weight:700;white-space:nowrap;">DERNIÈRE MAJ</div>
<div class="a" style="left:1391.3px;top:402.28px;font-size:10.3px;line-height:10.3px;color:#3d454c;font-weight:700;white-space:nowrap;">TOTAL</div>
<div class="a" style="left:1391.3px;top:418.08px;font-size:10.3px;line-height:10.3px;color:#3d454c;font-weight:700;white-space:nowrap;">ACHAT</div>
<div class="a" style="left:262.0px;top:447.30px;font-size:13px;line-height:13px;color:#4f565c;font-weight:400;white-space:nowrap;">1</div>
<svg class="a" style="left:304px;top:449px" width="11" height="12" viewBox="0 0 13 14"><path d="M1.5 12.5 L2.2 9.6 L9.6 2.2 A1.3 1.3 0 0 1 11.4 2.2 L11.8 2.6 A1.3 1.3 0 0 1 11.8 4.4 L4.4 11.8 Z" stroke="#3a9fd8" stroke-width="1.4" fill="none" stroke-linejoin="round"/><path d="M9 3 L11 5" stroke="#3a9fd8" stroke-width="1.4"/><circle cx="11" cy="3" r="1.4" fill="#3a9fd8"/></svg>
<div class="a" style="left:317.0px;top:447.30px;font-size:13px;line-height:13px;color:#3a9fd8;font-weight:400;white-space:nowrap;">P1</div>
<div class="a" style="left:404.5px;top:448.14px;font-size:12px;line-height:12px;color:#4f565c;font-weight:400;white-space:nowrap;">FDEMOP1</div>
<div class="a" style="right:1329.5px;top:447.37px;font-size:13.5px;line-height:13.5px;color:#0d0df2;font-weight:700;white-space:nowrap;text-align:right;">3</div>
<div class="a" style="right:1207.5px;top:447.30px;font-size:13px;line-height:13px;color:#f20000;font-weight:700;white-space:nowrap;text-align:right;">34,90 €</div>
<div class="a" style="left:729.5px;top:439.55px;font-size:12.7px;line-height:12.7px;color:#4f565c;font-weight:400;white-space:nowrap;">Chaussure de sécurité haute Agate II cuir pleine fleur S3 SRC</div>
<div class="a" style="left:729.5px;top:455.95px;font-size:12.7px;line-height:12.7px;color:#4f565c;font-weight:400;white-space:nowrap;">couleur noir</div>
<div class="a" style="right:699.8px;top:447.30px;font-size:13px;line-height:13px;color:#c6cacf;font-weight:400;white-space:nowrap;text-align:right;">0</div>
<div class="a" style="left:1238.0px;top:439.30px;font-size:13px;line-height:13px;color:#861b96;font-weight:400;white-space:nowrap;">plus de 3 mois</div>
<div class="a" style="left:1238.0px;top:455.00px;font-size:13px;line-height:13px;color:#861b96;font-weight:400;white-space:nowrap;">mercredi 25 juin</div>
<div class="a" style="right:444.7px;top:447.30px;font-size:13px;line-height:13px;color:#f20000;font-weight:700;white-space:nowrap;text-align:right;">104,70 €</div>
<div class="a" style="left:262.0px;top:488.30px;font-size:13px;line-height:13px;color:#4f565c;font-weight:400;white-space:nowrap;">2</div>
<svg class="a" style="left:304px;top:490px" width="11" height="12" viewBox="0 0 13 14"><path d="M1.5 12.5 L2.2 9.6 L9.6 2.2 A1.3 1.3 0 0 1 11.4 2.2 L11.8 2.6 A1.3 1.3 0 0 1 11.8 4.4 L4.4 11.8 Z" stroke="#3a9fd8" stroke-width="1.4" fill="none" stroke-linejoin="round"/><path d="M9 3 L11 5" stroke="#3a9fd8" stroke-width="1.4"/><circle cx="11" cy="3" r="1.4" fill="#3a9fd8"/></svg>
<div class="a" style="left:317.0px;top:488.30px;font-size:13px;line-height:13px;color:#3a9fd8;font-weight:400;white-space:nowrap;">P10</div>
<div class="a" style="left:404.5px;top:489.14px;font-size:12px;line-height:12px;color:#4f565c;font-weight:400;white-space:nowrap;">FDEMOP10</div>
<div class="a" style="right:1329.5px;top:488.37px;font-size:13.5px;line-height:13.5px;color:#0d0df2;font-weight:700;white-space:nowrap;text-align:right;">4</div>
<div class="a" style="right:1207.5px;top:488.30px;font-size:13px;line-height:13px;color:#f20000;font-weight:700;white-space:nowrap;text-align:right;">220,60 €</div>
<div class="a" style="left:729.5px;top:480.55px;font-size:12.7px;line-height:12.7px;color:#4f565c;font-weight:400;white-space:nowrap;">Perceuse visseuse LXT 18V Makita DDF453SFE - 2 batteries Li-Ion</div>
<div class="a" style="left:729.5px;top:496.95px;font-size:12.7px;line-height:12.7px;color:#4f565c;font-weight:400;white-space:nowrap;">3Ah + chargeur + coffret plastique</div>
<div class="a" style="right:699.8px;top:488.30px;font-size:13px;line-height:13px;color:#c6cacf;font-weight:400;white-space:nowrap;text-align:right;">0</div>
<div class="a" style="left:1238.0px;top:480.30px;font-size:13px;line-height:13px;color:#861b96;font-weight:400;white-space:nowrap;">plus de 3 mois</div>
<div class="a" style="left:1238.0px;top:496.00px;font-size:13px;line-height:13px;color:#861b96;font-weight:400;white-space:nowrap;">mercredi 25 juin</div>
<div class="a" style="right:444.7px;top:488.30px;font-size:13px;line-height:13px;color:#f20000;font-weight:700;white-space:nowrap;text-align:right;">882,40 €</div>
<div class="a" style="left:262.0px;top:529.30px;font-size:13px;line-height:13px;color:#4f565c;font-weight:400;white-space:nowrap;">3</div>
<svg class="a" style="left:304px;top:531px" width="11" height="12" viewBox="0 0 13 14"><path d="M1.5 12.5 L2.2 9.6 L9.6 2.2 A1.3 1.3 0 0 1 11.4 2.2 L11.8 2.6 A1.3 1.3 0 0 1 11.8 4.4 L4.4 11.8 Z" stroke="#3a9fd8" stroke-width="1.4" fill="none" stroke-linejoin="round"/><path d="M9 3 L11 5" stroke="#3a9fd8" stroke-width="1.4"/><circle cx="11" cy="3" r="1.4" fill="#3a9fd8"/></svg>
<div class="a" style="left:317.0px;top:529.30px;font-size:13px;line-height:13px;color:#3a9fd8;font-weight:400;white-space:nowrap;">P15</div>
<div class="a" style="left:404.5px;top:530.14px;font-size:12px;line-height:12px;color:#4f565c;font-weight:400;white-space:nowrap;">FDEMOP15</div>
<div class="a" style="right:1329.5px;top:529.37px;font-size:13.5px;line-height:13.5px;color:#0d0df2;font-weight:700;white-space:nowrap;text-align:right;">35</div>
<div class="a" style="right:1207.5px;top:529.30px;font-size:13px;line-height:13px;color:#f20000;font-weight:700;white-space:nowrap;text-align:right;">8,96 €</div>
<div class="a" style="left:729.5px;top:521.55px;font-size:12.7px;line-height:12.7px;color:#4f565c;font-weight:400;white-space:nowrap;">Jeu de charbons CB 440 compatible avec plusieurs visseuses</div>
<div class="a" style="left:729.5px;top:537.95px;font-size:12.7px;line-height:12.7px;color:#4f565c;font-weight:400;white-space:nowrap;">Makita</div>
<div class="a" style="right:699.8px;top:529.30px;font-size:13px;line-height:13px;color:#c6cacf;font-weight:400;white-space:nowrap;text-align:right;">0</div>
<div class="a" style="left:1238.0px;top:521.30px;font-size:13px;line-height:13px;color:#861b96;font-weight:400;white-space:nowrap;">plus de 3 mois</div>
<div class="a" style="left:1238.0px;top:537.00px;font-size:13px;line-height:13px;color:#861b96;font-weight:400;white-space:nowrap;">mercredi 25 juin</div>
<div class="a" style="right:444.7px;top:529.30px;font-size:13px;line-height:13px;color:#f20000;font-weight:700;white-space:nowrap;text-align:right;">313,60 €</div>
<div class="a" style="left:262.0px;top:570.30px;font-size:13px;line-height:13px;color:#4f565c;font-weight:400;white-space:nowrap;">4</div>
<svg class="a" style="left:304px;top:572px" width="11" height="12" viewBox="0 0 13 14"><path d="M1.5 12.5 L2.2 9.6 L9.6 2.2 A1.3 1.3 0 0 1 11.4 2.2 L11.8 2.6 A1.3 1.3 0 0 1 11.8 4.4 L4.4 11.8 Z" stroke="#3a9fd8" stroke-width="1.4" fill="none" stroke-linejoin="round"/><path d="M9 3 L11 5" stroke="#3a9fd8" stroke-width="1.4"/><circle cx="11" cy="3" r="1.4" fill="#3a9fd8"/></svg>
<div class="a" style="left:317.0px;top:570.30px;font-size:13px;line-height:13px;color:#3a9fd8;font-weight:400;white-space:nowrap;">P16</div>
<div class="a" style="left:404.5px;top:571.14px;font-size:12px;line-height:12px;color:#4f565c;font-weight:400;white-space:nowrap;">FDEMOP16</div>
<div class="a" style="right:1329.5px;top:570.37px;font-size:13.5px;line-height:13.5px;color:#0d0df2;font-weight:700;white-space:nowrap;text-align:right;">70</div>
<div class="a" style="right:1207.5px;top:570.30px;font-size:13px;line-height:13px;color:#f20000;font-weight:700;white-space:nowrap;text-align:right;">2,90 €</div>
<div class="a" style="left:729.5px;top:570.55px;font-size:12.7px;line-height:12.7px;color:#4f565c;font-weight:400;white-space:nowrap;">Silicone 7070 Plus cartouche de 300 ml</div>
<div class="a" style="right:699.8px;top:570.30px;font-size:13px;line-height:13px;color:#c6cacf;font-weight:400;white-space:nowrap;text-align:right;">0</div>
<div class="a" style="left:1238.0px;top:562.30px;font-size:13px;line-height:13px;color:#861b96;font-weight:400;white-space:nowrap;">plus de 3 mois</div>
<div class="a" style="left:1238.0px;top:578.00px;font-size:13px;line-height:13px;color:#861b96;font-weight:400;white-space:nowrap;">mercredi 25 juin</div>
<div class="a" style="right:444.7px;top:570.30px;font-size:13px;line-height:13px;color:#f20000;font-weight:700;white-space:nowrap;text-align:right;">203,00 €</div>
<div class="a" style="left:262.0px;top:611.30px;font-size:13px;line-height:13px;color:#4f565c;font-weight:400;white-space:nowrap;">5</div>
<svg class="a" style="left:304px;top:613px" width="11" height="12" viewBox="0 0 13 14"><path d="M1.5 12.5 L2.2 9.6 L9.6 2.2 A1.3 1.3 0 0 1 11.4 2.2 L11.8 2.6 A1.3 1.3 0 0 1 11.8 4.4 L4.4 11.8 Z" stroke="#3a9fd8" stroke-width="1.4" fill="none" stroke-linejoin="round"/><path d="M9 3 L11 5" stroke="#3a9fd8" stroke-width="1.4"/><circle cx="11" cy="3" r="1.4" fill="#3a9fd8"/></svg>
<div class="a" style="left:317.0px;top:611.30px;font-size:13px;line-height:13px;color:#3a9fd8;font-weight:400;white-space:nowrap;">P17</div>
<div class="a" style="left:404.5px;top:612.14px;font-size:12px;line-height:12px;color:#4f565c;font-weight:400;white-space:nowrap;">FDEMOP17</div>
<div class="a" style="right:1329.5px;top:611.37px;font-size:13.5px;line-height:13.5px;color:#0d0df2;font-weight:700;white-space:nowrap;text-align:right;">13</div>
<div class="a" style="right:1207.5px;top:611.30px;font-size:13px;line-height:13px;color:#f20000;font-weight:700;white-space:nowrap;text-align:right;">8,90 €</div>
<div class="a" style="left:729.5px;top:611.55px;font-size:12.7px;line-height:12.7px;color:#4f565c;font-weight:400;white-space:nowrap;">Pulvérisateur dégrippant Multifonction WD-40</div>
<div class="a" style="right:699.8px;top:611.30px;font-size:13px;line-height:13px;color:#c6cacf;font-weight:400;white-space:nowrap;text-align:right;">0</div>
<div class="a" style="left:1238.0px;top:603.30px;font-size:13px;line-height:13px;color:#861b96;font-weight:400;white-space:nowrap;">plus de 3 mois</div>
<div class="a" style="left:1238.0px;top:619.00px;font-size:13px;line-height:13px;color:#861b96;font-weight:400;white-space:nowrap;">mercredi 25 juin</div>
<div class="a" style="right:444.7px;top:611.30px;font-size:13px;line-height:13px;color:#f20000;font-weight:700;white-space:nowrap;text-align:right;">115,70 €</div>
<div class="a" style="left:262.0px;top:652.30px;font-size:13px;line-height:13px;color:#4f565c;font-weight:400;white-space:nowrap;">6</div>
<svg class="a" style="left:304px;top:654px" width="11" height="12" viewBox="0 0 13 14"><path d="M1.5 12.5 L2.2 9.6 L9.6 2.2 A1.3 1.3 0 0 1 11.4 2.2 L11.8 2.6 A1.3 1.3 0 0 1 11.8 4.4 L4.4 11.8 Z" stroke="#3a9fd8" stroke-width="1.4" fill="none" stroke-linejoin="round"/><path d="M9 3 L11 5" stroke="#3a9fd8" stroke-width="1.4"/><circle cx="11" cy="3" r="1.4" fill="#3a9fd8"/></svg>
<div class="a" style="left:317.0px;top:652.30px;font-size:13px;line-height:13px;color:#3a9fd8;font-weight:400;white-space:nowrap;">P18</div>
<div class="a" style="left:404.5px;top:653.14px;font-size:12px;line-height:12px;color:#4f565c;font-weight:400;white-space:nowrap;">FDEMOP18</div>
<div class="a" style="right:1329.5px;top:652.37px;font-size:13.5px;line-height:13.5px;color:#0d0df2;font-weight:700;white-space:nowrap;text-align:right;">7</div>
<div class="a" style="right:1207.5px;top:652.30px;font-size:13px;line-height:13px;color:#f20000;font-weight:700;white-space:nowrap;text-align:right;">50,40 €</div>
<div class="a" style="left:729.5px;top:644.55px;font-size:12.7px;line-height:12.7px;color:#4f565c;font-weight:400;white-space:nowrap;">Lame de scie bois Festool denture fine pour scie circulaire</div>
<div class="a" style="left:729.5px;top:660.95px;font-size:12.7px;line-height:12.7px;color:#4f565c;font-weight:400;white-space:nowrap;">portative 160 x 2.2 x 20 mm</div>
<div class="a" style="right:699.8px;top:652.30px;font-size:13px;line-height:13px;color:#c6cacf;font-weight:400;white-space:nowrap;text-align:right;">0</div>
<div class="a" style="left:1238.0px;top:644.30px;font-size:13px;line-height:13px;color:#861b96;font-weight:400;white-space:nowrap;">plus de 3 mois</div>
<div class="a" style="left:1238.0px;top:660.00px;font-size:13px;line-height:13px;color:#861b96;font-weight:400;white-space:nowrap;">mercredi 25 juin</div>
<div class="a" style="right:444.7px;top:652.30px;font-size:13px;line-height:13px;color:#f20000;font-weight:700;white-space:nowrap;text-align:right;">352,80 €</div>
<div class="a" style="left:262.0px;top:693.30px;font-size:13px;line-height:13px;color:#4f565c;font-weight:400;white-space:nowrap;">7</div>
<svg class="a" style="left:304px;top:695px" width="11" height="12" viewBox="0 0 13 14"><path d="M1.5 12.5 L2.2 9.6 L9.6 2.2 A1.3 1.3 0 0 1 11.4 2.2 L11.8 2.6 A1.3 1.3 0 0 1 11.8 4.4 L4.4 11.8 Z" stroke="#3a9fd8" stroke-width="1.4" fill="none" stroke-linejoin="round"/><path d="M9 3 L11 5" stroke="#3a9fd8" stroke-width="1.4"/><circle cx="11" cy="3" r="1.4" fill="#3a9fd8"/></svg>
<div class="a" style="left:317.0px;top:693.30px;font-size:13px;line-height:13px;color:#3a9fd8;font-weight:400;white-space:nowrap;">P19</div>
<div class="a" style="left:404.5px;top:694.14px;font-size:12px;line-height:12px;color:#4f565c;font-weight:400;white-space:nowrap;">FDEMOP19</div>
<div class="a" style="right:1329.5px;top:693.37px;font-size:13.5px;line-height:13.5px;color:#0d0df2;font-weight:700;white-space:nowrap;text-align:right;">7</div>
<div class="a" style="right:1207.5px;top:693.30px;font-size:13px;line-height:13px;color:#f20000;font-weight:700;white-space:nowrap;text-align:right;">183,42 €</div>
<div class="a" style="left:729.5px;top:685.55px;font-size:12.7px;line-height:12.7px;color:#4f565c;font-weight:400;white-space:nowrap;">Meuleuses Makita GA9020 230 mm 2200W + GA5030R 125 mm 720</div>
<div class="a" style="left:729.5px;top:701.95px;font-size:12.7px;line-height:12.7px;color:#4f565c;font-weight:400;white-space:nowrap;">w Référence DK0097X1</div>
<div class="a" style="right:699.8px;top:693.30px;font-size:13px;line-height:13px;color:#c6cacf;font-weight:400;white-space:nowrap;text-align:right;">0</div>
<div class="a" style="left:1238.0px;top:685.30px;font-size:13px;line-height:13px;color:#861b96;font-weight:400;white-space:nowrap;">plus de 3 mois</div>
<div class="a" style="left:1238.0px;top:701.00px;font-size:13px;line-height:13px;color:#861b96;font-weight:400;white-space:nowrap;">mercredi 25 juin</div>
<div class="a" style="right:444.7px;top:693.30px;font-size:13px;line-height:13px;color:#f20000;font-weight:700;white-space:nowrap;text-align:right;">1 283,94 €</div>
<div class="a" style="left:262.0px;top:734.30px;font-size:13px;line-height:13px;color:#4f565c;font-weight:400;white-space:nowrap;">8</div>
<svg class="a" style="left:304px;top:736px" width="11" height="12" viewBox="0 0 13 14"><path d="M1.5 12.5 L2.2 9.6 L9.6 2.2 A1.3 1.3 0 0 1 11.4 2.2 L11.8 2.6 A1.3 1.3 0 0 1 11.8 4.4 L4.4 11.8 Z" stroke="#3a9fd8" stroke-width="1.4" fill="none" stroke-linejoin="round"/><path d="M9 3 L11 5" stroke="#3a9fd8" stroke-width="1.4"/><circle cx="11" cy="3" r="1.4" fill="#3a9fd8"/></svg>
<div class="a" style="left:317.0px;top:734.30px;font-size:13px;line-height:13px;color:#3a9fd8;font-weight:400;white-space:nowrap;">P2</div>
<div class="a" style="left:404.5px;top:735.14px;font-size:12px;line-height:12px;color:#4f565c;font-weight:400;white-space:nowrap;">FDEMOP2</div>
<div class="a" style="right:1329.5px;top:734.37px;font-size:13.5px;line-height:13.5px;color:#0d0df2;font-weight:700;white-space:nowrap;text-align:right;">9</div>
<div class="a" style="right:1207.5px;top:734.30px;font-size:13px;line-height:13px;color:#f20000;font-weight:700;white-space:nowrap;text-align:right;">11,42 €</div>
<div class="a" style="left:729.5px;top:734.55px;font-size:12.7px;line-height:12.7px;color:#4f565c;font-weight:400;white-space:nowrap;">Platoir inox lisse série Pro Taliaplast monture alu 28 x 12 cm</div>
<div class="a" style="right:699.8px;top:734.30px;font-size:13px;line-height:13px;color:#c6cacf;font-weight:400;white-space:nowrap;text-align:right;">0</div>
<div class="a" style="left:1238.0px;top:726.30px;font-size:13px;line-height:13px;color:#861b96;font-weight:400;white-space:nowrap;">plus de 3 mois</div>
<div class="a" style="left:1238.0px;top:742.00px;font-size:13px;line-height:13px;color:#861b96;font-weight:400;white-space:nowrap;">mercredi 25 juin</div>
<div class="a" style="right:444.7px;top:734.30px;font-size:13px;line-height:13px;color:#f20000;font-weight:700;white-space:nowrap;text-align:right;">102,78 €</div>
<div class="a" style="left:262.0px;top:775.30px;font-size:13px;line-height:13px;color:#4f565c;font-weight:400;white-space:nowrap;">9</div>
<svg class="a" style="left:304px;top:777px" width="11" height="12" viewBox="0 0 13 14"><path d="M1.5 12.5 L2.2 9.6 L9.6 2.2 A1.3 1.3 0 0 1 11.4 2.2 L11.8 2.6 A1.3 1.3 0 0 1 11.8 4.4 L4.4 11.8 Z" stroke="#3a9fd8" stroke-width="1.4" fill="none" stroke-linejoin="round"/><path d="M9 3 L11 5" stroke="#3a9fd8" stroke-width="1.4"/><circle cx="11" cy="3" r="1.4" fill="#3a9fd8"/></svg>
<div class="a" style="left:317.0px;top:775.30px;font-size:13px;line-height:13px;color:#3a9fd8;font-weight:400;white-space:nowrap;">P3</div>
<div class="a" style="left:404.5px;top:776.14px;font-size:12px;line-height:12px;color:#4f565c;font-weight:400;white-space:nowrap;">FDEMOP3</div>
<div class="a" style="right:1329.5px;top:775.37px;font-size:13.5px;line-height:13.5px;color:#0d0df2;font-weight:700;white-space:nowrap;text-align:right;">15</div>
<div class="a" style="right:1207.5px;top:775.30px;font-size:13px;line-height:13px;color:#f20000;font-weight:700;white-space:nowrap;text-align:right;">8,20 €</div>
<div class="a" style="left:729.5px;top:775.55px;font-size:12.7px;line-height:12.7px;color:#4f565c;font-weight:400;white-space:nowrap;">Résine hybride de scellement FIS HT 300 - 300 mL</div>
<div class="a" style="right:699.8px;top:775.37px;font-size:13.5px;line-height:13.5px;color:#0d0df2;font-weight:700;white-space:nowrap;text-align:right;">3</div>
<div class="a" style="left:1238.0px;top:767.30px;font-size:13px;line-height:13px;color:#861b96;font-weight:400;white-space:nowrap;">plus de 3 mois</div>
<div class="a" style="left:1238.0px;top:783.00px;font-size:13px;line-height:13px;color:#861b96;font-weight:400;white-space:nowrap;">mercredi 25 juin</div>
<div class="a" style="right:444.7px;top:775.30px;font-size:13px;line-height:13px;color:#f20000;font-weight:700;white-space:nowrap;text-align:right;">123,00 €</div>
<div class="a" style="left:262.0px;top:816.30px;font-size:13px;line-height:13px;color:#4f565c;font-weight:400;white-space:nowrap;">10</div>
<svg class="a" style="left:304px;top:818px" width="11" height="12" viewBox="0 0 13 14"><path d="M1.5 12.5 L2.2 9.6 L9.6 2.2 A1.3 1.3 0 0 1 11.4 2.2 L11.8 2.6 A1.3 1.3 0 0 1 11.8 4.4 L4.4 11.8 Z" stroke="#3a9fd8" stroke-width="1.4" fill="none" stroke-linejoin="round"/><path d="M9 3 L11 5" stroke="#3a9fd8" stroke-width="1.4"/><circle cx="11" cy="3" r="1.4" fill="#3a9fd8"/></svg>
<div class="a" style="left:317.0px;top:816.30px;font-size:13px;line-height:13px;color:#3a9fd8;font-weight:400;white-space:nowrap;">P5</div>
<div class="a" style="left:404.5px;top:817.14px;font-size:12px;line-height:12px;color:#4f565c;font-weight:400;white-space:nowrap;">FDEMOP5</div>
<div class="a" style="right:1329.5px;top:816.37px;font-size:13.5px;line-height:13.5px;color:#0d0df2;font-weight:700;white-space:nowrap;text-align:right;">11</div>
<div class="a" style="right:1207.5px;top:816.30px;font-size:13px;line-height:13px;color:#f20000;font-weight:700;white-space:nowrap;text-align:right;">6,52 €</div>
<div class="a" style="left:729.5px;top:816.55px;font-size:12.7px;line-height:12.7px;color:#4f565c;font-weight:400;white-space:nowrap;">Mètre à ruban 162 classe II robuste</div>
<div class="a" style="right:699.8px;top:816.30px;font-size:13px;line-height:13px;color:#c6cacf;font-weight:400;white-space:nowrap;text-align:right;">0</div>
<div class="a" style="left:1238.0px;top:808.30px;font-size:13px;line-height:13px;color:#861b96;font-weight:400;white-space:nowrap;">plus de 3 mois</div>
<div class="a" style="left:1238.0px;top:824.00px;font-size:13px;line-height:13px;color:#861b96;font-weight:400;white-space:nowrap;">mercredi 25 juin</div>
<div class="a" style="right:444.7px;top:816.30px;font-size:13px;line-height:13px;color:#f20000;font-weight:700;white-space:nowrap;text-align:right;">71,72 €</div>
<div class="a" style="left:254px;top:836px;width:1229px;height:24px;background:#e9ecef"></div>
<div class="a" style="left:254px;top:860px;width:1229px;height:1px;background:#dcdfe3"></div>
<div class="a" style="left:294px;top:836px;width:1px;height:24px;background:#dcdfe3"></div>
<div class="a" style="left:395px;top:836px;width:1px;height:24px;background:#dcdfe3"></div>
<div class="a" style="left:497px;top:836px;width:1px;height:24px;background:#dcdfe3"></div>
<div class="a" style="left:599px;top:836px;width:1px;height:24px;background:#dcdfe3"></div>
<div class="a" style="left:721px;top:836px;width:1px;height:24px;background:#dcdfe3"></div>
<div class="a" style="left:1127px;top:836px;width:1px;height:24px;background:#dcdfe3"></div>
<div class="a" style="left:1229px;top:836px;width:1px;height:24px;background:#dcdfe3"></div>
<div class="a" style="left:1381px;top:836px;width:1px;height:24px;background:#dcdfe3"></div>
<div class="a" style="left:396px;top:836px;width:6px;height:23px;background:linear-gradient(90deg,rgba(0,0,0,0.05),rgba(0,0,0,0))"></div>
<div class="a" style="right:1329.5px;top:841.57px;font-size:13.5px;line-height:13.5px;color:#0d0df2;font-weight:700;white-space:nowrap;text-align:right;">13</div>
<div class="a" style="right:444.7px;top:841.00px;font-size:13px;line-height:13px;color:#f20000;font-weight:700;white-space:nowrap;text-align:right;">3 773,32 €</div>
<div class="a" style="left:253.5px;top:872.20px;font-size:13px;line-height:13px;color:#4f565c;font-weight:400;white-space:nowrap;">Commentaire :</div>
<div class="a" style="left:1096px;top:869px;width:405px;height:178px;background:#fff;border-radius:5px;box-shadow:0 1px 3px rgba(30,40,60,0.13)"></div>
<div class="a" style="left:1116.0px;top:892.81px;font-size:25.5px;line-height:25.5px;color:#343a40;font-weight:400;white-space:nowrap;">Totaux</div>
<div class="a" style="right:439.0px;top:892.00px;font-size:13px;line-height:13px;color:#4f565c;font-weight:400;white-space:nowrap;text-align:right;">HT</div>
<div class="a" style="left:1116.2px;top:942.00px;font-size:13px;line-height:13px;color:#4f565c;font-weight:400;white-space:nowrap;">Frais</div>
<div class="a" style="right:439.0px;top:942.33px;font-size:13.2px;line-height:13.2px;color:#f26a3b;font-weight:400;white-space:nowrap;text-align:right;">0,00 €</div>
<div class="a" style="left:1116.2px;top:971.00px;font-size:13px;line-height:13px;color:#4f565c;font-weight:400;white-space:nowrap;">Total Eco Taxe</div>
<div class="a" style="right:439.0px;top:971.33px;font-size:13.2px;line-height:13.2px;color:#f26a3b;font-weight:400;white-space:nowrap;text-align:right;">0,00 €</div>
<div class="a" style="left:1116.2px;top:1001.30px;font-size:13px;line-height:13px;color:#4f565c;font-weight:400;white-space:nowrap;">Total Achat</div>
<div class="a" style="right:439.0px;top:1000.95px;font-size:14px;line-height:14px;color:#0d0df2;font-weight:700;white-space:nowrap;text-align:right;">3 773,32 €</div>
<div class="a" style="left:1510px;top:141px;width:406px;height:818px;background:#fff;border-radius:5px 5px 0 0"></div>
<div class="a" style="left:1916px;top:141px;width:4px;height:939px;background:#eef0f4"></div>
<div class="a" style="left:1904px;top:146px;width:8px;height:606px;background:#369dd6;border-radius:4px"></div>
<div class="a" style="left:1542px;top:170px;width:326px;height:292px;background:#fff;border:1.5px solid #1b6cf7;border-radius:6px;overflow:hidden"></div>
<div class="a" style="left:1543px;top:171px;width:324px;height:48px;background:#f7f7f7;border-radius:5px 5px 0 0"></div>
<div class="a" style="left:1543px;top:219px;width:324px;height:1px;background:#d6d6d6"></div>
<div class="a" style="left:1543px;top:256px;width:324px;height:1px;background:#e2e2e2"></div>
<div class="a" style="left:1543px;top:313px;width:324px;height:1px;background:#e2e2e2"></div>
<div class="a" style="left:1543px;top:350px;width:324px;height:1px;background:#e2e2e2"></div>
<div class="a" style="left:1543px;top:387px;width:324px;height:1px;background:#e2e2e2"></div>
<div class="a" style="left:1543px;top:424px;width:324px;height:1px;background:#e2e2e2"></div>
<div class="a" style="left:1405.0px;width:600px;text-align:center;top:182.06px;font-size:18px;line-height:18px;color:#3a9fd8;font-weight:400;white-space:nowrap;letter-spacing:-0.35px"><svg style="display:inline-block;vertical-align:-1px;margin-right:3px" width="15" height="16" viewBox="0 0 13 14"><path d="M1.5 12.5 L2.2 9.6 L9.6 2.2 A1.3 1.3 0 0 1 11.4 2.2 L11.8 2.6 A1.3 1.3 0 0 1 11.8 4.4 L4.4 11.8 Z" stroke="#3a9fd8" stroke-width="1.4" fill="none" stroke-linejoin="round"/><path d="M9 3 L11 5" stroke="#3a9fd8" stroke-width="1.4"/><circle cx="11" cy="3" r="1.4" fill="#3a9fd8"/></svg>Commande CF92</div>
<div class="a" style="left:1559.4px;top:231.25px;font-size:12.7px;line-height:12.7px;color:#2a2f34;font-weight:400;white-space:nowrap;">Statut : Received</div>
<div class="a" style="left:1559.4px;top:267.95px;font-size:12.7px;line-height:12.7px;color:#861b96;font-weight:400;white-space:nowrap;">plus de 3 mois</div>
<div class="a" style="left:1559.4px;top:288.05px;font-size:12.7px;line-height:12.7px;color:#861b96;font-weight:400;white-space:nowrap;">mardi 24 juin</div>
<div class="a" style="left:1559.4px;top:324.76px;font-size:12.8px;line-height:12.8px;color:#2a2f34;font-weight:400;white-space:nowrap;">Fournisseur : FournisseurDemo</div>
<div class="a" style="left:1559.4px;top:362.25px;font-size:12.7px;line-height:12.7px;color:#2a2f34;font-weight:400;white-space:nowrap;">Contact : Marc Dupont</div>
<div class="a" style="left:1559.4px;top:398.95px;font-size:12.7px;line-height:12.7px;color:#2a2f34;font-weight:400;white-space:nowrap;">Nb Produits : 13</div>
<div class="a" style="left:1559.4px;top:435.65px;font-size:12.7px;line-height:12.7px;color:#2a2f34;font-weight:400;white-space:nowrap;">Entrepot : Principal</div>
<div class="a" style="left:1689px;top:468px;width:32px;height:31px;border-radius:4px 4px 4px 4px;background:linear-gradient(180deg,#5aa2f7,#3a7fe6);overflow:hidden"><svg style="position:absolute;left:6px;top:4px" width="20" height="23" viewBox="0 0 20 23"><path d="M10 2 V14" stroke="#f7f0ff" stroke-width="4" stroke-linecap="round"/><path d="M2.5 11 L10 19.5 L17.5 11 Z" fill="#f7f0ff" stroke="#f7f0ff" stroke-width="1.5" stroke-linejoin="round"/></svg></div>
<div class="a" style="left:1542px;top:508px;width:326px;height:218px;background:#fff;border:1px solid #d3d3d3;border-radius:6px;overflow:hidden"></div>
<div class="a" style="left:1543px;top:509px;width:324px;height:48px;background:#f7f7f7;border-radius:5px 5px 0 0"></div>
<div class="a" style="left:1543px;top:557px;width:324px;height:1px;background:#d6d6d6"></div>
<div class="a" style="left:1543px;top:595px;width:324px;height:1px;background:#e2e2e2"></div>
<div class="a" style="left:1543px;top:651px;width:324px;height:1px;background:#e2e2e2"></div>
<div class="a" style="left:1543px;top:688px;width:324px;height:1px;background:#e2e2e2"></div>
<div class="a" style="left:1405.0px;width:600px;text-align:center;top:519.96px;font-size:18px;line-height:18px;color:#3a9fd8;font-weight:400;white-space:nowrap;letter-spacing:-0.35px"><svg style="display:inline-block;vertical-align:-1px;margin-right:3px" width="15" height="16" viewBox="0 0 13 14"><path d="M1.5 12.5 L2.2 9.6 L9.6 2.2 A1.3 1.3 0 0 1 11.4 2.2 L11.8 2.6 A1.3 1.3 0 0 1 11.8 4.4 L4.4 11.8 Z" stroke="#3a9fd8" stroke-width="1.4" fill="none" stroke-linejoin="round"/><path d="M9 3 L11 5" stroke="#3a9fd8" stroke-width="1.4"/><circle cx="11" cy="3" r="1.4" fill="#3a9fd8"/></svg>Réception RF91</div>
<div class="a" style="left:1559.4px;top:569.25px;font-size:12.7px;line-height:12.7px;color:#2a2f34;font-weight:400;white-space:nowrap;">Statut : Reçue</div>
<div class="a" style="left:1559.4px;top:606.25px;font-size:12.7px;line-height:12.7px;color:#861b96;font-weight:400;white-space:nowrap;">plus de 2 mois</div>
<div class="a" style="left:1559.4px;top:625.65px;font-size:12.7px;line-height:12.7px;color:#861b96;font-weight:400;white-space:nowrap;">mercredi 16 juillet</div>
<div class="a" style="left:1559.4px;top:663.15px;font-size:12.7px;line-height:12.7px;color:#2a2f34;font-weight:400;white-space:nowrap;">Nb Colis :</div>
<div class="a" style="left:1559.4px;top:700.05px;font-size:12.7px;line-height:12.7px;color:#2a2f34;font-weight:400;white-space:nowrap;">Receptionniste :</div>
<div class="a" style="left:1542px;top:727px;width:326px;height:217px;background:#fff;border:1px solid #d3d3d3;border-radius:6px;overflow:hidden"></div>
<div class="a" style="left:1543px;top:728px;width:324px;height:47px;background:#f7f7f7;border-radius:5px 5px 0 0"></div>
<div class="a" style="left:1543px;top:775px;width:324px;height:1px;background:#d6d6d6"></div>
<div class="a" style="left:1543px;top:812px;width:324px;height:1px;background:#e2e2e2"></div>
<div class="a" style="left:1543px;top:869px;width:324px;height:1px;background:#e2e2e2"></div>
<div class="a" style="left:1543px;top:906px;width:324px;height:1px;background:#e2e2e2"></div>
<div class="a" style="left:1405.0px;width:600px;text-align:center;top:738.16px;font-size:18px;line-height:18px;color:#3a9fd8;font-weight:400;white-space:nowrap;letter-spacing:-0.35px"><svg style="display:inline-block;vertical-align:-1px;margin-right:3px" width="15" height="16" viewBox="0 0 13 14"><path d="M1.5 12.5 L2.2 9.6 L9.6 2.2 A1.3 1.3 0 0 1 11.4 2.2 L11.8 2.6 A1.3 1.3 0 0 1 11.8 4.4 L4.4 11.8 Z" stroke="#3a9fd8" stroke-width="1.4" fill="none" stroke-linejoin="round"/><path d="M9 3 L11 5" stroke="#3a9fd8" stroke-width="1.4"/><circle cx="11" cy="3" r="1.4" fill="#3a9fd8"/></svg>Réception RF88</div>
<div class="a" style="left:1559.4px;top:787.15px;font-size:12.7px;line-height:12.7px;color:#2a2f34;font-weight:400;white-space:nowrap;">Statut : Reçue</div>
<div class="a" style="left:1559.4px;top:824.25px;font-size:12.7px;line-height:12.7px;color:#861b96;font-weight:400;white-space:nowrap;">plus de 3 mois</div>
<div class="a" style="left:1559.4px;top:844.05px;font-size:12.7px;line-height:12.7px;color:#861b96;font-weight:400;white-space:nowrap;">mercredi 25 juin</div>
<div class="a" style="left:1559.4px;top:881.05px;font-size:12.7px;line-height:12.7px;color:#2a2f34;font-weight:400;white-space:nowrap;">Nb Colis :</div>
<div class="a" style="left:1559.4px;top:918.05px;font-size:12.7px;line-height:12.7px;color:#2a2f34;font-weight:400;white-space:nowrap;">Receptionniste :</div>
<div class="a" style="left:1689px;top:950px;width:32px;height:9px;border-radius:4px 4px 0 0;background:linear-gradient(180deg,#5aa2f7,#3a7fe6);overflow:hidden"><svg style="position:absolute;left:6px;top:4px" width="20" height="23" viewBox="0 0 20 23"><path d="M10 2 V14" stroke="#f7f0ff" stroke-width="4" stroke-linecap="round"/><path d="M2.5 11 L10 19.5 L17.5 11 Z" fill="#f7f0ff" stroke="#f7f0ff" stroke-width="1.5" stroke-linejoin="round"/></svg></div>
<div class="a" style="left:1509px;top:959px;width:204px;height:39px;background:#e8ebee;border-radius:4px;"></div>
<svg class="a" style="left:1527px;top:970px" width="18" height="18" viewBox="0 0 18 18"><path d="M7 3 Q7.8 8.2 13 9 Q7.8 9.8 7 15 Q6.2 9.8 1 9 Q6.2 8.2 7 3 Z" stroke="#3a9fd8" stroke-width="1.5" fill="none" stroke-linejoin="round"/><path d="M14 0.5 L14.6 2.4 L16.5 3 L14.6 3.6 L14 5.5 L13.4 3.6 L11.5 3 L13.4 2.4 Z M13 13 L13.5 14.5 L15 15 L13.5 15.5 L13 17 L12.5 15.5 L11 15 L12.5 14.5 Z" fill="#3a9fd8"/></svg>
<div class="a" style="left:1550.0px;top:971.66px;font-size:13.4px;line-height:13.4px;color:#3a9fd8;font-weight:400;white-space:nowrap;">Optimisation commande</div>
<div class="a" style="left:1713px;top:959px;width:112px;height:39px;background:#fff;border-radius:0;border-bottom:2px solid #3a9fd8;"></div>
<svg class="a" style="left:1731px;top:969px" width="17" height="19" viewBox="0 0 17 19"><rect x="1" y="1" width="5" height="4.5" stroke="#222" stroke-width="1.5" fill="none"/><rect x="1" y="13.5" width="5" height="4.5" stroke="#222" stroke-width="1.5" fill="none"/><rect x="10.5" y="7.5" width="5" height="4.5" stroke="#222" stroke-width="1.5" fill="none"/><path d="M3.5 5.5 V13.5 M3.5 9.7 H10.5" stroke="#222" stroke-width="1.5"/></svg>
<div class="a" style="left:1753.0px;top:971.40px;font-size:13.7px;line-height:13.7px;color:#212529;font-weight:400;white-space:nowrap;">Workflow</div>
<div class="a" style="left:1509px;top:998px;width:143px;height:39px;background:#e8ebee;border-radius:4px;"></div>
<svg class="a" style="left:1527px;top:1009px" width="18" height="18" viewBox="0 0 18 18"><path d="M1.5 2.5 A1 1 0 0 1 2.5 1.5 H15.5 A1 1 0 0 1 16.5 2.5 V12.5 A1 1 0 0 1 15.5 13.5 H13.5 V17 L10 13.5 H2.5 A1 1 0 0 1 1.5 12.5 Z" stroke="#3a9fd8" stroke-width="1.7" fill="none" stroke-linejoin="round"/><path d="M4.5 5 H13.5 M4.5 7.5 H13.5 M4.5 10 H11" stroke="#3a9fd8" stroke-width="1.5"/></svg>
<div class="a" style="left:1550.0px;top:1010.91px;font-size:13.1px;line-height:13.1px;color:#3a9fd8;font-weight:400;white-space:nowrap;">Commentaires</div>
<div class="a" style="left:1652px;top:998px;width:114px;height:39px;background:#e8ebee;border-radius:4px;"></div>
<svg class="a" style="left:1671px;top:1011px" width="18" height="15" viewBox="0 0 18 15"><rect x="1" y="1" width="16" height="13" rx="1.5" stroke="#3a9fd8" stroke-width="1.7" fill="none"/><path d="M1.5 2 L9 8 L16.5 2" stroke="#3a9fd8" stroke-width="1.7" fill="none"/></svg>
<div class="a" style="left:1694.0px;top:1011.84px;font-size:12px;line-height:12px;color:#3a9fd8;font-weight:400;white-space:nowrap;">Messages</div>
<div class="a" style="left:1766px;top:998px;width:85px;height:39px;background:#e8ebee;border-radius:4px;"></div>
<svg class="a" style="left:1784px;top:1010px" width="19" height="16" viewBox="0 0 19 16"><path d="M1.5 2 A1 1 0 0 1 2.5 1 H12 L17.5 8 L12 15 H2.5 A1 1 0 0 1 1.5 14 Z" stroke="#3a9fd8" stroke-width="1.7" fill="none" stroke-linejoin="round"/></svg>
<div class="a" style="left:1808.0px;top:1011.67px;font-size:12.2px;line-height:12.2px;color:#3a9fd8;font-weight:400;white-space:nowrap;">Tags</div>
<div class="a" style="left:1509px;top:1037px;width:125px;height:39px;background:#e8ebee;border-radius:4px;"></div>
<svg class="a" style="left:1526px;top:1050px" width="19" height="13" viewBox="0 0 19 13"><path d="M12.5 3.5 H5 A3 3 0 0 0 5 9.5 H13.5 A4.5 4.5 0 0 0 13.5 0.8 H5 A5.8 5.8 0 0 0 5 12.2 H13" stroke="#3a9fd8" stroke-width="1.6" fill="none"/></svg>
<div class="a" style="left:1550.0px;top:1049.91px;font-size:13.1px;line-height:13.1px;color:#3a9fd8;font-weight:400;white-space:nowrap;">Documents</div>
</body></html>
